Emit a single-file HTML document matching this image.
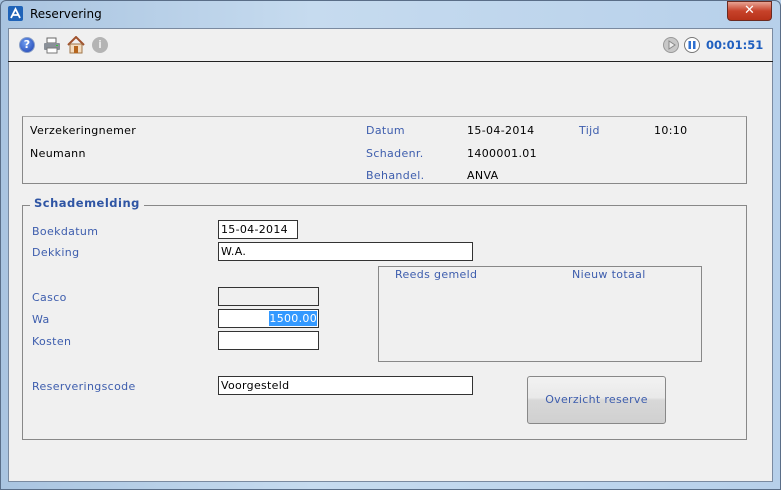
<!DOCTYPE html>
<html><head><meta charset="utf-8"><style>
*{margin:0;padding:0;box-sizing:border-box}
body{width:781px;height:490px;position:relative;overflow:hidden;background:linear-gradient(90deg,#a9c4e0,#c6dbef 40%,#b7d0ea);font-family:"DejaVu Sans","Liberation Sans",sans-serif;font-size:11px}
.a{position:absolute}
.lb{color:#3d5dad;position:absolute;white-space:nowrap;line-height:13px;letter-spacing:0.35px}
.tx{color:#000;position:absolute;white-space:nowrap;line-height:13px;letter-spacing:0.35px}
.in{position:absolute;background:#fff;border:1px solid #333;height:19px;font-size:11px;line-height:17px;padding-left:2px;color:#000;letter-spacing:0.3px}
</style></head><body>
<div class="a" style="left:0;top:0;width:781px;height:490px;border:1px solid #5a6e88;border-radius:6px 6px 0 0"></div>
<div class="a" style="left:8px;top:6px;width:15px;height:15px;background:#1f63b8;border-radius:2px"><svg width="15" height="15"><path d="M3 12 L7.5 3 L12 12 M5 9 L10 9" stroke="#fff" stroke-width="1.8" fill="none"/></svg></div>
<div class="a" style="left:30px;top:7px;font-size:12px;color:#000;font-family:'DejaVu Sans',sans-serif">Reservering</div>
<div class="a" style="left:727px;top:1px;width:45px;height:20px;border-radius:0 0 4px 4px;background:linear-gradient(#e8a393,#c7422a 50%,#b73219);border:1px solid #6b2a20"><div style="color:#fff;font-weight:bold;font-size:13px;text-align:center;line-height:17px">✕</div></div>
<div class="a" style="left:8px;top:28px;width:765px;height:454px;background:#f0f0f0;border:1px solid #7a8aa0"></div>
<div class="a" style="left:8px;top:61px;width:765px;height:1px;background:#222"></div>
<div class="a" style="left:19px;top:37px;width:16px;height:16px;border-radius:50%;background:radial-gradient(circle at 40% 35%,#6f9ef0,#1c3fb0);border:1px solid #8aa0c8;color:#fff;font-weight:bold;font-size:11px;text-align:center;line-height:14px">?</div>
<svg class="a" style="left:43px;top:37px" width="18" height="17"><rect x="4" y="1" width="9" height="5" fill="#fff" stroke="#666"/><rect x="1" y="6" width="16" height="7" rx="1" fill="#8a9098"/><rect x="4" y="11" width="10" height="5" fill="#fff" stroke="#777"/><rect x="13" y="8" width="2" height="1" fill="#3c3"/></svg>
<svg class="a" style="left:67px;top:36px" width="18" height="18"><path d="M1 9 L9 1 L17 9" stroke="#a0522d" stroke-width="2" fill="none"/><rect x="3" y="8" width="12" height="9" fill="#f3dcc0" stroke="#a0764a"/><rect x="7" y="10" width="4" height="7" fill="#b5651d"/></svg>
<div class="a" style="left:92px;top:37px;width:16px;height:16px;border-radius:50%;background:#b4b4b4;color:#e8e8e8;font-weight:bold;font-size:11px;text-align:center;line-height:16px">i</div>
<div class="a" style="left:663px;top:37px;width:16px;height:16px;border-radius:50%;background:#c8c8c8;border:1px solid #999"><svg width="14" height="14"><path d="M5 3 L11 7 L5 11 Z" fill="#eee" stroke="#888"/></svg></div>
<div class="a" style="left:684px;top:37px;width:16px;height:16px;border-radius:50%;background:#fff;border:1px solid #777"><svg width="14" height="14"><rect x="3.5" y="3" width="2.5" height="8" fill="#2d6fd0"/><rect x="8" y="3" width="2.5" height="8" fill="#2d6fd0"/></svg></div>
<div class="a" style="left:706px;top:38px;color:#1f5fbf;font-weight:bold;font-size:11.5px">00:01:51</div>

<div class="a" style="left:22px;top:116px;width:725px;height:68px;border:1px solid #888;border-top-color:#aaa"></div>
<div class="tx" style="left:30px;top:124px">Verzekeringnemer</div>
<div class="tx" style="left:30px;top:147px">Neumann</div>
<div class="lb" style="left:366px;top:124px">Datum</div>
<div class="lb" style="left:366px;top:147px">Schadenr.</div>
<div class="lb" style="left:366px;top:169px">Behandel.</div>
<div class="tx" style="left:467px;top:124px">15-04-2014</div>
<div class="tx" style="left:467px;top:147px">1400001.01</div>
<div class="tx" style="left:467px;top:169px">ANVA</div>
<div class="lb" style="left:579px;top:124px">Tijd</div>
<div class="tx" style="left:654px;top:124px">10:10</div>

<div class="a" style="left:22px;top:205px;width:725px;height:235px;border:1px solid #888"></div>
<div class="a" style="left:30px;top:196px;background:#f0f0f0;padding:0 4px;color:#2f55a4;font-weight:bold;font-size:11.5px;letter-spacing:0.5px;line-height:15px">Schademelding</div>
<div class="lb" style="left:32px;top:225px">Boekdatum</div>
<div class="lb" style="left:32px;top:246px">Dekking</div>
<div class="lb" style="left:32px;top:291px">Casco</div>
<div class="lb" style="left:32px;top:313px">Wa</div>
<div class="lb" style="left:32px;top:335px">Kosten</div>
<div class="lb" style="left:32px;top:380px">Reserveringscode</div>
<div class="in" style="left:218px;top:220px;width:80px">15-04-2014</div>
<div class="in" style="left:218px;top:242px;width:255px">W.A.</div>
<div class="in" style="left:218px;top:287px;width:101px;background:#f0f0f0"></div>
<div class="in" style="left:218px;top:309px;width:101px;text-align:right;padding:0 1px 0 0"><span style="background:#3399ff;color:#fff;padding:1px 0">1500.00</span></div>
<div class="in" style="left:218px;top:331px;width:101px"></div>
<div class="in" style="left:218px;top:376px;width:255px">Voorgesteld</div>
<div class="a" style="left:378px;top:266px;width:324px;height:96px;border:1px solid #888"></div>
<div class="lb" style="left:395px;top:268px">Reeds gemeld</div>
<div class="lb" style="left:572px;top:268px">Nieuw totaal</div>
<div class="a" style="left:527px;top:376px;width:139px;height:48px;border:1px solid #888;border-radius:3px;background:linear-gradient(#f2f2f2,#e9e9e9 45%,#d8d8d8 50%,#d0d0d0);color:#3d5dad;text-align:center;line-height:46px;letter-spacing:0.3px">Overzicht reserve</div>
</body></html>
